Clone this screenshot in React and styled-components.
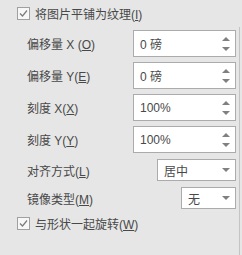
import React from 'react';
import styled, { createGlobalStyle } from 'styled-components';

const fields = [
  { label: '偏移量 X (', key: 'O', value: '0 磅' },
  { label: '偏移量 Y(', key: 'E', value: '0 磅' },
  { label: '刻度 X(', key: 'X', value: '100%' },
  { label: '刻度 Y(', key: 'Y', value: '100%' },
];

function CheckBox() {
  return (
    <Box>
      <svg width="11" height="11" viewBox="0 0 11 11">
        <path d="M2 5.5 L4.5 8 L9 2.5" fill="none" stroke="#7a7a7a" strokeWidth="1.2" />
      </svg>
    </Box>
  );
}

function App() {
  return (
    <Page>
      <GlobalStyle />
      <Content>
        <CheckRow>
          <CheckBox />
          <span>将图片平铺为纹理(<u>I</u>)</span>
        </CheckRow>

        <Fields>
          {fields.map((f) => (
            <Row key={f.key}>
              <Label>{f.label}<u>{f.key}</u>)</Label>
              <Spin>
                <span>{f.value}</span>
                <Arrows>
                  <Up />
                  <Down />
                </Arrows>
              </Spin>
            </Row>
          ))}
          <Row $top={1}>
            <Label>对齐方式(<u>L</u>)</Label>
            <Select $w={79}>
              <span>居中</span>
              <Down />
            </Select>
          </Row>
          <Row $top={1}>
            <Label>镜像类型(<u>M</u>)</Label>
            <Select $w={55}>
              <span>无</span>
              <Down />
            </Select>
          </Row>
        </Fields>

        <CheckRow $top={8}>
          <CheckBox />
          <span>与形状一起旋转(<u>W</u>)</span>
        </CheckRow>
      </Content>
      <Edge />
    </Page>
  );
}

const GlobalStyle = createGlobalStyle`
  html, body {
    margin: 0;
    padding: 0;
    background: #e6e6e6;
  }
  u {
    text-underline-offset: 1px;
  }
`;

const Page = styled.div`
  width: 242px;
  height: 255px;
  display: flex;
  background: #e6e6e6;
  color: #484848;
  font-family: 'Liberation Sans', 'Noto Sans CJK SC', sans-serif;
  font-size: 12px;
  overflow: hidden;
`;

const Content = styled.div`
  flex: 1;
  padding: 7px 0 0 17px;
`;

const Edge = styled.div`
  width: 1px;
  margin: 27px 2px 0 0;
  background: #c4c4c4;
`;

const CheckRow = styled.div`
  display: flex;
  align-items: center;
  gap: 5px;
  height: 13px;
  margin-top: ${(p) => p.$top || 0}px;
  white-space: nowrap;
`;

const Box = styled.div`
  width: 11px;
  height: 11px;
  border: 1px solid #a0a0a0;
  background: #f7f7f7;
  display: flex;
`;

const Fields = styled.div`
  margin-top: 10px;
  padding-left: 10px;
  width: 209px;
  display: flex;
  flex-direction: column;
  gap: 5px;
`;

const Row = styled.div`
  display: flex;
  align-items: center;
  justify-content: space-between;
  margin-top: ${(p) => p.$top || 0}px;
  white-space: nowrap;
`;

const Label = styled.span`
  color: #484848;
`;

const Spin = styled.div`
  box-sizing: border-box;
  width: 103px;
  height: 27px;
  border: 1px solid #ababab;
  background: #fff;
  display: flex;
  align-items: center;
  justify-content: space-between;
  padding: 0 5px 0 6px;
`;

const Arrows = styled.div`
  display: flex;
  flex-direction: column;
  gap: 6px;
  margin-top: 1px;
`;

const Up = styled.div`
  width: 0;
  height: 0;
  border-left: 4px solid transparent;
  border-right: 4px solid transparent;
  border-bottom: 4px solid #808080;
`;

const Down = styled.div`
  width: 0;
  height: 0;
  border-left: 4px solid transparent;
  border-right: 4px solid transparent;
  border-top: 4px solid #808080;
`;

const Select = styled.div`
  box-sizing: border-box;
  width: ${(p) => p.$w}px;
  height: 22px;
  border: 1px solid #ababab;
  background: #fff;
  display: flex;
  align-items: center;
  justify-content: space-between;
  padding: 0 5px 0 6px;
`;

export default App;
